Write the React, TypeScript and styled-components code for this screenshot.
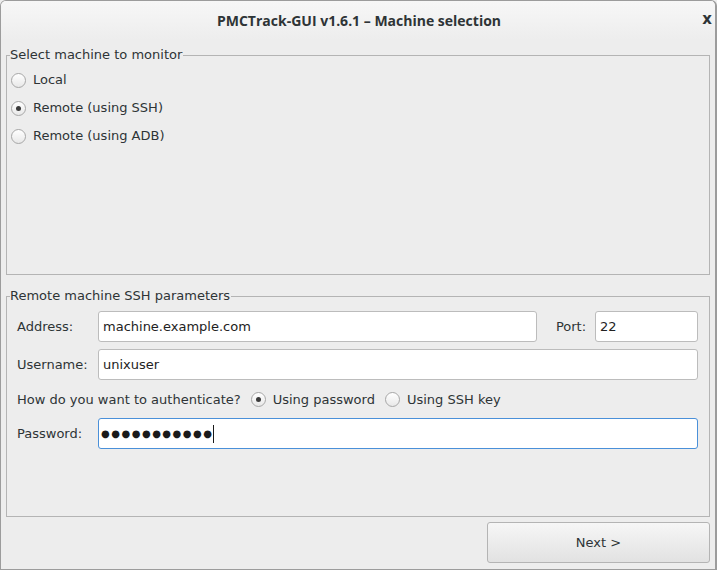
import styled, { createGlobalStyle } from "styled-components";

const GlobalStyle = createGlobalStyle`
  html, body {
    margin: 0;
    padding: 0;
    background: #ededed;
  }
  * {
    box-sizing: border-box;
  }
`;

function Radio({ checked, label }: { checked?: boolean; label: string }) {
  return (
    <RadioRow>
      <RadioCircle>{checked && <RadioDot />}</RadioCircle>
      <span>{label}</span>
    </RadioRow>
  );
}

function App() {
  return (
    <>
      <GlobalStyle />
      <Window>
        <TitleBar>
          <Title>PMCTrack-GUI v1.6.1 – Machine selection</Title>
          <Close>x</Close>
        </TitleBar>
        <Content>
          <Group $height={228}>
            <Legend>Select machine to monitor</Legend>
            <RadioList>
              <Radio label="Local" />
              <Radio checked label="Remote (using SSH)" />
              <Radio label="Remote (using ADB)" />
            </RadioList>
          </Group>
          <Group $height={229}>
            <Legend>Remote machine SSH parameters</Legend>
            <Form>
              <FormRow>
                <FieldLabel>Address:</FieldLabel>
                <Field $width={439} readOnly value="machine.example.com" />
                <PortLabel>Port:</PortLabel>
                <Field $width={103} readOnly value="22" />
              </FormRow>
              <FormRow>
                <FieldLabel>Username:</FieldLabel>
                <Field readOnly value="unixuser" />
              </FormRow>
              <AuthRow>
                <span>How do you want to authenticate?</span>
                <Radio checked label="Using password" />
                <Radio label="Using SSH key" />
              </AuthRow>
              <FormRow>
                <FieldLabel>Password:</FieldLabel>
                <PasswordField>
                  <Dots>●●●●●●●●●●●</Dots>
                  <Caret />
                </PasswordField>
              </FormRow>
            </Form>
          </Group>
          <Footer>
            <NextButton>Next &gt;</NextButton>
          </Footer>
        </Content>
      </Window>
    </>
  );
}

const Window = styled.div`
  width: 717px;
  height: 570px;
  border: 1px solid #9c9c9c;
  border-right-width: 2px;
  border-radius: 6px 6px 0 0;
  background: #ededed;
  display: flex;
  flex-direction: column;
  overflow: hidden;
  font-family: "DejaVu Sans", sans-serif;
  font-size: 13px;
  color: #2e3436;
`;

const TitleBar = styled.div`
  height: 39px;
  flex-shrink: 0;
  display: flex;
  align-items: center;
  justify-content: center;
  position: relative;
  background: linear-gradient(#f7f7f7, #ededed);
`;

const Title = styled.div`
  font-family: "Open Sans", sans-serif;
  font-weight: 700;
  font-size: 14px;
  color: #2e3436;
  margin-left: 2px;
`;

const Close = styled.div`
  position: absolute;
  right: 3px;
  top: 9px;
  font-family: "DejaVu Sans", sans-serif;
  font-weight: 700;
  font-size: 15px;
  color: #2e3436;
`;

const Content = styled.div`
  flex: 1;
  display: flex;
  flex-direction: column;
  padding: 7px 5px 0 5px;
`;

const Group = styled.fieldset<{ $height: number }>`
  height: ${(p) => p.$height}px;
  margin: 0 0 13px 0;
  padding: 0;
  border: 1px solid #b4b4b4;
  border-radius: 0;
  min-width: 0;
  display: flex;
  flex-direction: column;
`;

const Legend = styled.legend`
  margin-left: 3px;
  padding: 0 1px 0 0;
  line-height: 16px;
  color: #2e3436;
`;

const RadioList = styled.div`
  display: flex;
  flex-direction: column;
  padding: 8px 0 0 4px;
  gap: 10px;
`;

const RadioRow = styled.div`
  display: flex;
  align-items: center;
  gap: 7px;
  height: 18px;
  line-height: 18px;
`;

const RadioCircle = styled.div`
  width: 15px;
  height: 15px;
  border-radius: 50%;
  border: 1px solid #a7a7a7;
  background: linear-gradient(#ffffff, #e8e8e8);
  display: flex;
  align-items: center;
  justify-content: center;
  flex-shrink: 0;
`;

const RadioDot = styled.div`
  width: 5px;
  height: 5px;
  border-radius: 50%;
  background: #3a3a3a;
`;

const Form = styled.div`
  display: flex;
  flex-direction: column;
  padding: 7px 11px 0 10px;
  gap: 7px;
`;

const FormRow = styled.div`
  display: flex;
  align-items: center;
`;

const FieldLabel = styled.span`
  width: 81px;
  flex-shrink: 0;
`;

const PortLabel = styled.span`
  margin: 0 9px 0 19px;
`;

const Field = styled.input<{ $width?: number }>`
  ${(p) => (p.$width ? `width: ${p.$width}px;` : "flex: 1;")}
  min-width: 0;
  height: 31px;
  border: 1px solid #bcbcbc;
  border-radius: 3px;
  background: #ffffff;
  padding: 0 4px;
  font-family: "DejaVu Sans", sans-serif;
  font-size: 13px;
  color: #222;
  outline: none;
`;

const AuthRow = styled.div`
  display: flex;
  align-items: center;
  gap: 10px;
  height: 25px;
  margin: 0 0 -1px 0;
`;

const PasswordField = styled.div`
  flex: 1;
  height: 31px;
  border: 1px solid #4a90d9;
  border-radius: 3px;
  background: #ffffff;
  padding: 0 2px;
  display: flex;
  align-items: center;
`;

const Dots = styled.span`
  font-size: 10px;
  letter-spacing: 1.5px;
  color: #1a1a1a;
`;

const Caret = styled.span`
  width: 1px;
  height: 18px;
  background: #1a1a1a;
  margin-left: 0;
`;

const Footer = styled.div`
  display: flex;
  justify-content: flex-end;
  margin-top: -8px;
`;

const NextButton = styled.button`
  width: 223px;
  height: 41px;
  border: 1px solid #b4b4b4;
  border-radius: 3px;
  background: linear-gradient(#f6f6f6, #e2e2e2);
  font-family: "DejaVu Sans", sans-serif;
  font-size: 13px;
  color: #2e3436;
`;

export default App;
